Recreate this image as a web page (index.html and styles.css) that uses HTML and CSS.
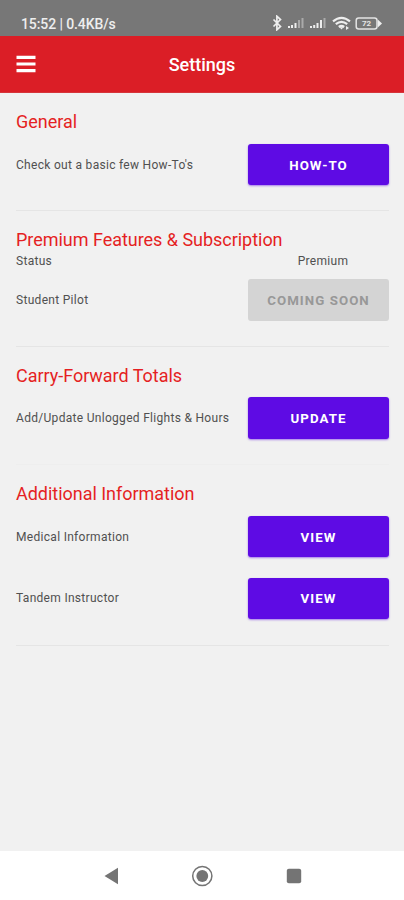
FILE: index.html
```html
<!DOCTYPE html>
<html lang="en">
<head>
<meta charset="utf-8">
<title>Settings</title>
<link rel="stylesheet" href="styles.css">
</head>
<body>
<div class="status">
  <span class="clock">15:52 | 0.4KB/s</span>
  <svg class="indicators" width="112" height="16" viewBox="0 0 112 16" fill="none">
    <path d="M2.500 4.500l7 7-3.600 3.300V1.200L9.500 4.500l-7 7" stroke="#eee" stroke-width="1.700"/>
    <path d="M18 13v-2M21 13v-3M24.500 13V8" stroke="#eee" stroke-width="2"/>
    <path d="M28 13V5M31.500 13V3" stroke="#aaa" stroke-width="2"/>
    <path d="M40 13v-2M43.200 13v-3M46.500 13V8M50 13V5" stroke="#eee" stroke-width="2"/>
    <path d="M53.500 13V3" stroke="#aaa" stroke-width="2"/>
    <path d="M62 6.300q8.500-7 17 0M64.800 9.200q5.700-4.500 11.400 0M67.800 12q2.700-2 5.400 0" stroke="#eee" stroke-width="2.200"/>
    <path d="M68.500 12.300h4l-2 2.200zM75 11l3 2-3 2z" fill="#eee"/>
    <rect x="85.200" y="3" width="20.800" height="11" rx="2.500" stroke="#e4e4e4" stroke-width="1.500"/>
    <path d="M106.800 4.500L111 8.500l-4.200 4z" fill="#eee"/>
    <text class="charge" x="95.500" y="11.300" text-anchor="middle">72</text>
  </svg>
</div>
<header class="bar">
  <svg class="menu" width="20" height="18" viewBox="0 0 20 18"><path d="M.5 2.300h19M.5 9h19M.5 15.700h19" stroke="#fff" stroke-width="3.200"/></svg>
  <h1>Settings</h1>
</header>
<main>
  <section>
    <h2 class="short">General</h2>
    <div class="row"><span>Check out a basic few How-To's</span><button>HOW-TO</button></div>
  </section>
  <section>
    <h2>Premium Features &amp; Subscription</h2>
    <div class="plan"><span>Status</span><span class="value">Premium</span></div>
    <div class="row"><span>Student Pilot</span><button class="soon" disabled>COMING SOON</button></div>
  </section>
  <section class="faint">
    <h2>Carry-Forward Totals</h2>
    <div class="row"><span>Add/Update Unlogged Flights &amp; Hours</span><button>UPDATE</button></div>
  </section>
  <section>
    <h2>Additional Information</h2>
    <div class="row"><span>Medical Information</span><button>VIEW</button></div>
    <div class="row"><span>Tandem Instructor</span><button>VIEW</button></div>
  </section>
</main>
<nav>
  <svg width="404" height="49" viewBox="0 0 404 49">
    <path d="M104.500 25L118 16.800v16.400z" fill="#747474"/>
    <circle cx="202.300" cy="25" r="9.600" fill="none" stroke="#747474" stroke-width="1.500"/>
    <circle cx="202.300" cy="25" r="5.900" fill="#747474"/>
    <rect x="286.800" y="17.800" width="14.400" height="14.400" rx="2" fill="#747474"/>
  </svg>
</nav>
</body>
</html>
```
FILE: styles.css
```css
* { box-sizing: border-box; }
body {
  margin: 0;
  height: 900px;
  display: flex;
  flex-direction: column;
  background: #f1f1f1;
  font-family: Roboto, sans-serif;
  overflow: hidden;
}
.status {
  height: 36px;
  padding: 9px 21px 0 21px;
  display: flex;
  justify-content: space-between;
  background: #777;
  color: #eee;
}
.clock { font-size: 14px; line-height: 30px; font-weight: 500; letter-spacing: -.1px; }
.indicators { margin-top: 6px; }
.charge { font-size: 8px; font-weight: 700; fill: #e4e4e4; }
.bar {
  height: 57px;
  padding: 0 16px;
  display: grid;
  grid-template-columns: 20px 1fr 20px;
  align-items: center;
  background: #db1e26;
  border-bottom: 1px solid #d5353b;
  color: #fff;
}
h1 { margin: 0; padding-top: 2px; text-align: center; font-size: 18px; font-weight: 500; line-height: 24px; }
main { flex: 1; padding: 0 15px 0 16px; }
section { padding: 17px 0 15px; border-bottom: 1px solid #e5e5e5; }
section.faint { border-color: #eee; }
h2 {
  margin: 0;
  color: #e51f23;
  font-size: 18px;
  font-weight: 400;
  line-height: 24px;
  letter-spacing: -.03px;
}
h2.short { letter-spacing: 0; }
.row, .plan {
  display: flex;
  justify-content: space-between;
  align-items: center;
  color: #505050;
  font-size: 12px;
  letter-spacing: .3px;
  white-space: nowrap;
}
.row { height: 62.300px; }
h2 + .row, .plan + .row { height: 61.300px; }
.row + .row { height: 62.600px; }
.plan { height: 17px; }
.value { width: 132px; text-align: center; }
button {
  width: 141px;
  height: 41.500px;
  padding: 1px 0 0;
  border: 0;
  border-radius: 3px;
  background: #5e0be4;
  color: #fff;
  font: 700 13.300px Roboto, sans-serif;
  letter-spacing: 1.050px;
  box-shadow: 0 1px 2px #5e0be480;
}
button.soon { background: #d4d4d4; color: #989898; box-shadow: none; }
nav { height: 49px; background: #fff; }
nav svg { display: block; }
```
